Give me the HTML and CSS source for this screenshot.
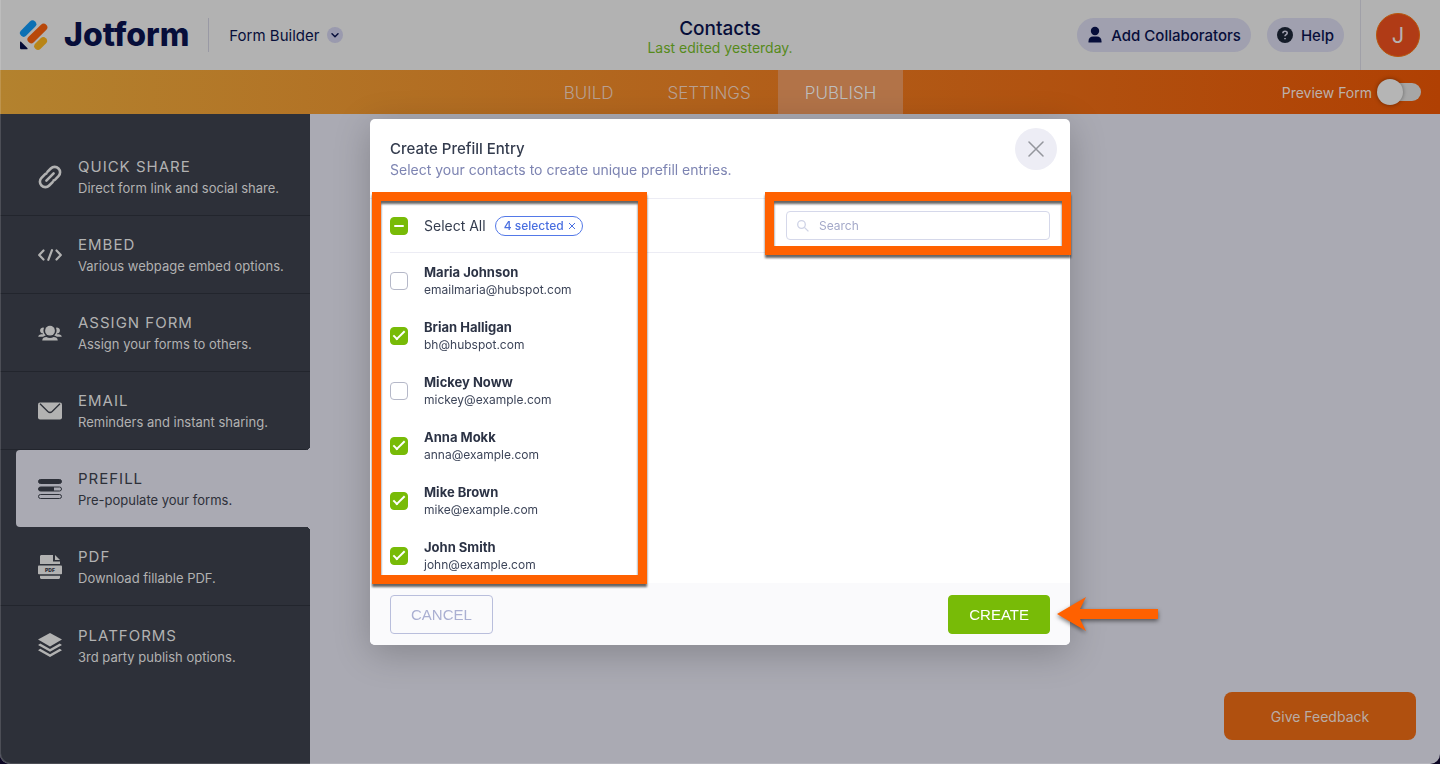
FILE: index.html
```html
<!DOCTYPE html>
<html lang="en">
<head>
<meta charset="utf-8">
<meta name="viewport" content="width=device-width, initial-scale=1">
<title>Contacts - Jotform Form Builder</title>
<link rel="stylesheet" href="styles.css">
</head>
<body>
<div class="app">
  <header class="topbar">
    <div class="topbar-left">
      <a class="brand" href="#">
        <svg class="brand-mark" viewBox="0 0 30 32" aria-hidden="true">
          <g fill="none" stroke-width="7.4" stroke-linecap="round">
            <path stroke="#0c70b4" d="M4.7 14 13.5 5.200"/>
            <path stroke="#b8480a" d="M12.200 20.500 24.600 8.300"/>
            <path stroke="#b88517" d="M19 27.200 24.300 21.900"/>
          </g>
          <path fill="#040b36" d="M1 23.300c0-.8.7-1 1.300-.4l6 6c.6.6.3 1.400-.5 1.400H2.600c-1 0-1.600-.6-1.600-1.600z"/>
        </svg>
        <span class="brand-name">Jotform</span>
      </a>
      <button class="product" type="button">Form Builder
        <span class="chevron"><svg viewBox="0 0 16 16" aria-hidden="true"><path d="M5 6.800 8 9.700 11 6.800"/></svg></span>
      </button>
    </div>
    <div class="doc">
      <h1 class="doc-title">Contacts</h1>
      <p class="doc-status">Last edited yesterday.</p>
    </div>
    <div class="topbar-right">
      <button class="pill" type="button">
        <svg viewBox="0 0 16 18" class="icon-user" aria-hidden="true"><circle cx="8" cy="5" r="4.200"/><path d="M1.500 16.500v-1.300C1.500 12 3.500 10.500 6 10.500h4c2.500 0 4.500 1.500 4.500 4.700v1.300z"/></svg>
        Add Collaborators</button>
      <button class="pill pill-help" type="button">
        <svg viewBox="0 0 16 16" class="icon-help" aria-hidden="true"><circle cx="8" cy="8" r="8"/><path d="M5.900 6.300C5.900 5 6.800 4.300 8 4.300s2.200.7 2.200 1.800c0 1.600-2.200 1.500-2.200 3.200M8 10.900v1.300"/></svg>
        Help</button>
      <div class="account"><button class="avatar" type="button">J</button></div>
    </div>
  </header>

  <nav class="tabs">
    <div class="tab-list">
      <a class="tab" href="#">BUILD</a>
      <a class="tab" href="#">SETTINGS</a>
      <a class="tab tab-active" href="#">PUBLISH</a>
    </div>
    <label class="preview">Preview Form <input class="switch" type="checkbox"></label>
  </nav>

  <div class="content">
    <aside class="sidebar">
      <a class="side-item" href="#">
        <svg class="side-icon" viewBox="0 0 24 24" aria-hidden="true"><g fill="none" stroke="currentColor" stroke-width="2.600" stroke-linecap="round" stroke-linejoin="round"><path d="M8.400 15.600 15.600 8.400"/><path d="M9.400 6.900l3.400-3.400a5.400 5.400 0 0 1 7.700 7.700l-3.400 3.400a4 4 0 0 1-1.500.9"/><path d="M14.600 17.100l-3.400 3.400a5.400 5.400 0 0 1-7.700-7.700l3.400-3.400a4 4 0 0 1 1.500-.9"/></g></svg>
        <span class="side-text"><span class="side-title">QUICK SHARE</span><span class="side-note">Direct form link and social share.</span></span>
      </a>
      <a class="side-item" href="#">
        <svg class="side-icon" viewBox="0 0 24 24" aria-hidden="true"><path fill="none" stroke="currentColor" stroke-width="2.200" stroke-linejoin="round" stroke-linecap="round" d="M5.500 7.500 1.200 12l4.300 4.500M18.500 7.500l4.300 4.500-4.300 4.500M14 7.200 10.300 16.800"/></svg>
        <span class="side-text"><span class="side-title">EMBED</span><span class="side-note">Various webpage embed options.</span></span>
      </a>
      <a class="side-item" href="#">
        <svg class="side-icon" viewBox="0 0 24 24" aria-hidden="true"><g fill="currentColor"><circle cx="12" cy="9.700" r="4.900"/><path d="M4.200 19.400c.2-2.600 2-3.300 4.200-3.400 2 1.300 5.200 1.300 7.200 0 2.200.1 4 .8 4.200 3.400z"/><path d="M6 6.800a2.900 2.900 0 1 0-1 5.600v.9c-2.500 0-4.600.4-4.800 2.400h4.900c.7-.7 1.700-1 2.700-1.200A7 7 0 0 1 6 6.800z"/><path d="M18 6.800a2.900 2.900 0 1 1 1 5.600v.9c2.500 0 4.600.4 4.800 2.400h-4.900c-.7-.7-1.700-1-2.700-1.200A7 7 0 0 0 18 6.800z"/></g></svg>
        <span class="side-text"><span class="side-title">ASSIGN FORM</span><span class="side-note">Assign your forms to others.</span></span>
      </a>
      <a class="side-item" href="#">
        <svg class="side-icon" viewBox="0 0 24 24" aria-hidden="true"><rect x="0" y="3.500" width="24" height="17" rx="2" fill="currentColor"/><path d="M2 4.700 9.800 12.500q2.200 2 4.400 0L22 4.700" fill="none" stroke="#2d3039" stroke-width="1.300"/></svg>
        <span class="side-text"><span class="side-title">EMAIL</span><span class="side-note">Reminders and instant sharing.</span></span>
      </a>
      <a class="side-item side-active" href="#">
        <svg class="side-icon" viewBox="0 0 24 24" aria-hidden="true"><g fill="none" stroke="currentColor"><rect x=".5" y="2.500" width="23" height="4" rx="2" fill="currentColor"/><rect x=".5" y="10" width="23" height="4" rx="2"/><rect x=".5" y="17.500" width="23" height="4" rx="2"/></g><path fill="currentColor" d="M2.500 10H16v4H2.500a2 2 0 0 1 0-4z"/></svg>
        <span class="side-text"><span class="side-title">PREFILL</span><span class="side-note">Pre-populate your forms.</span></span>
      </a>
      <a class="side-item" href="#">
        <svg class="side-icon" viewBox="0 0 24 24" aria-hidden="true"><g fill="currentColor"><path d="M2 9V1.500C2 .6 2.600 0 3.500 0H15v6.500h7V9z"/><path d="M17 0l5 5h-5z"/><rect x="0" y="10.500" width="24" height="8.800" rx=".8"/><path d="M2 20.800h20v1.700c0 .9-.6 1.500-1.500 1.500h-17C2.600 24 2 23.400 2 22.500z"/></g><text x="12" y="16.800" class="pdf-tag">PDF</text></svg>
        <span class="side-text"><span class="side-title">PDF</span><span class="side-note">Download fillable PDF.</span></span>
      </a>
      <a class="side-item" href="#">
        <svg class="side-icon" viewBox="0 0 24 24" aria-hidden="true"><path fill="currentColor" d="M12 0 24 6.600 12 13.400 0 6.600z"/><path fill="currentColor" d="M2.300 10.500 12 16l9.700-5.500L24 12l-12 6.800L0 12z"/><path fill="currentColor" d="M2.300 15.700 12 21.200l9.700-5.500L24 17.200 12 24 0 17.200z"/></svg>
        <span class="side-text"><span class="side-title">PLATFORMS</span><span class="side-note">3rd party publish options.</span></span>
      </a>
    </aside>
    <main class="workspace">
      <button class="feedback" type="button">Give Feedback</button>
    </main>
  </div>
</div>

<div class="backdrop">
  <section class="modal" role="dialog" aria-labelledby="modal-title">
    <div class="modal-head">
      <div>
        <h2 class="modal-title" id="modal-title">Create Prefill Entry</h2>
        <p class="modal-note">Select your contacts to create unique prefill entries.</p>
      </div>
      <button class="close" type="button" aria-label="Close"><svg viewBox="0 0 16 16" aria-hidden="true"><path d="M1 1 15 15M15 1 1 15"/></svg></button>
    </div>
    <div class="modal-tools">
      <input class="check check-mixed" type="checkbox" id="all">
      <label class="all-label" for="all">Select All</label>
      <button class="count" type="button">4 selected <svg viewBox="0 0 8 8" aria-hidden="true"><path d="M1 1 7 7M7 1 1 7"/></svg></button>
      <label class="search">
        <svg viewBox="0 0 12 12" aria-hidden="true"><circle cx="4.500" cy="4.500" r="3.800"/><path d="M7.400 7.400 11.400 11.400"/></svg>
        <input type="text" placeholder="Search" aria-label="Search">
      </label>
    </div>
    <div class="people">
      <label class="person"><input class="check" type="checkbox"><span><b>Maria Johnson</b><span class="mail">emailmaria@hubspot.com</span></span></label>
      <label class="person"><input class="check" type="checkbox" checked><span><b>Brian Halligan</b><span class="mail">bh@hubspot.com</span></span></label>
      <label class="person"><input class="check" type="checkbox"><span><b>Mickey Noww</b><span class="mail">mickey@example.com</span></span></label>
      <label class="person"><input class="check" type="checkbox" checked><span><b>Anna Mokk</b><span class="mail">anna@example.com</span></span></label>
      <label class="person"><input class="check" type="checkbox" checked><span><b>Mike Brown</b><span class="mail">mike@example.com</span></span></label>
      <label class="person"><input class="check" type="checkbox" checked><span><b>John Smith</b><span class="mail">john@example.com</span></span></label>
    </div>
    <div class="modal-foot">
      <button class="btn btn-cancel" type="button">CANCEL</button>
      <button class="btn btn-create" type="button">CREATE</button>
    </div>
    <div class="callout callout-list"></div>
    <div class="callout callout-search"></div>
    <svg class="arrow" viewBox="0 0 101 36" aria-hidden="true"><path d="M0 18 29 1 23 13H101V23H23L29 35z"/></svg>
  </section>
</div>
</body>
</html>
```
FILE: styles.css
```css
* { box-sizing: border-box; }
body {
  margin: 0;
  background: #0c0624;
  color: #2c3345;
  font-family: Inter, "Liberation Sans", sans-serif;
}
h1, h2, p { margin: 0; font-weight: 400; }
button { border: 0; padding: 0; background: none; color: inherit; font: inherit; }
a { color: inherit; text-decoration: none; }

.app {
  display: flex;
  flex-direction: column;
  min-height: 100vh;
  border-radius: 0 0 10px 10px;
  overflow: hidden;
  background: #aaaab3;
}

.topbar {
  display: grid;
  grid-template-columns: 1fr auto 1fr;
  align-items: center;
  height: 70px;
  background: #b2b2b2;
  color: #070e3a;
}
.topbar-left { display: flex; align-items: center; padding-left: 19px; }
.brand { display: flex; align-items: center; gap: 15px; }
.brand-mark { width: 30px; height: 32px; }
.brand-name { font-size: 32px; font-weight: 800; line-height: 34px; }
.product {
  display: flex;
  align-items: center;
  gap: 8px;
  height: 34px;
  margin-left: 19px;
  padding-left: 20px;
  border-left: 1px solid #9999a4;
  font-size: 15px;
}
.chevron { display: flex; width: 16px; height: 16px; border-radius: 50%; background: #9a9aae; }
.chevron svg { width: 16px; fill: none; stroke: #070e3a; stroke-width: 1.500; stroke-linecap: round; stroke-linejoin: round; }
.doc { padding-top: 3px; text-align: center; }
.doc-title { font-size: 19px; font-weight: 500; line-height: 22px; }
.doc-status { color: #568a1b; font-size: 14px; line-height: 16px; }
.topbar-right { display: flex; align-items: center; justify-content: flex-end; gap: 16px; }
.pill {
  display: flex;
  align-items: center;
  gap: 8px;
  height: 34px;
  padding: 0 10px;
  border-radius: 17px;
  background: #a0a0af;
  font-size: 15px;
  font-weight: 500;
}
.icon-user { width: 16px; height: 18px; fill: #070e3a; }
.icon-help { width: 16px; height: 16px; fill: #151c29; }
.icon-help path { fill: none; stroke: #a0a0af; stroke-width: 1.600; }
.account { display: flex; align-items: center; height: 70px; padding: 0 20px 0 15px; border-left: 1px solid #a0a0a8; }
.avatar { width: 44px; height: 44px; border-radius: 50%; border: 1px solid #b8560b; background: #b03b16; color: #b6b2b2; font-size: 22px; }

.tabs {
  display: grid;
  grid-template-columns: 1fr auto 1fr;
  height: 44px;
  background: linear-gradient(90deg, #b3822e, #b2611b 50%, #b04003);
  color: #b8a092;
}
.tab-list { grid-column: 2; display: flex; }
.tab { display: flex; align-items: center; padding: 2px 27px 0; font-size: 17px; font-weight: 300; }
.tab-active { background: #b27348; color: #bebebe; }
.preview {
  display: flex;
  align-items: center;
  justify-content: flex-end;
  gap: 5px;
  padding-right: 19px;
  color: #bcb1ac;
  font-size: 14px;
}
.switch {
  appearance: none;
  display: flex;
  align-items: center;
  width: 44px;
  height: 18px;
  margin: 0;
  border-radius: 9px;
  background: linear-gradient(90deg, transparent 13px, #a6a6a6 13px);
}
.switch::before { content: ""; width: 26px; height: 26px; flex: none; border-radius: 50%; background: #b5b5b5; box-shadow: 0 0 4px rgba(0, 0, 0, .4); }

.content { display: flex; flex: 1; }
.sidebar { width: 310px; padding-top: 24px; background: #2d3039; color: #b2b2b2; }
.side-item {
  display: flex;
  align-items: center;
  gap: 16px;
  height: 78px;
  padding-left: 38px;
  border-bottom: 1px solid #22252d;
}
.side-item:last-child { border-bottom: 0; }
.side-active {
  position: relative;
  height: 77px;
  margin: 0 0 1px 16px;
  padding-left: 22px;
  border: 0;
  border-radius: 4px 0 0 4px;
  background: #aaaab3;
  color: #2d3039;
}
/* Rounded inner corners where the active item meets the workspace */
.side-active::before,
.side-active::after { content: ""; position: absolute; right: 0; width: 4px; height: 4px; }
.side-active::before { bottom: 100%; background: radial-gradient(circle at 0 0, #2d3039 4px, #aaaab3 4px); }
.side-active::after { top: 100%; background: radial-gradient(circle at 0 100%, #2d3039 4px, #aaaab3 4px); }
.side-icon { width: 24px; height: 24px; flex: none; }
.side-text { display: flex; flex-direction: column; padding-top: 1px; }
.side-title { font-size: 15px; line-height: 22px; letter-spacing: 1px; }
.side-note { font-size: 13px; line-height: 20px; }
.pdf-tag { fill: #2d3039; font-size: 5px; font-weight: 900; text-anchor: middle; }
.workspace { display: flex; flex: 1; align-items: flex-end; justify-content: flex-end; padding: 24px; }
.feedback { width: 192px; height: 48px; border-radius: 8px; background: #b0500f; color: #b9aca6; font-size: 14px; }

.backdrop { position: fixed; inset: 0; display: flex; align-items: center; justify-content: center; box-shadow: inset 1px -1px 0 rgba(255, 255, 255, .15); border-radius: 0 0 10px 10px; }
.modal { position: relative; width: 700px; border-radius: 5px; background: #fff; box-shadow: 0 8px 36px rgba(0, 0, 0, .22); }
.modal-head { display: flex; justify-content: space-between; padding: 9px 13px 0 20px; height: 80px; border-bottom: 1px solid #ececf4; }
.modal-title { padding-top: 10px; color: #343c4e; font-size: 15px; font-weight: 500; line-height: 22px; }
.modal-note { color: #7d84b2; font-size: 14px; line-height: 20px; }
.close { display: flex; align-items: center; justify-content: center; width: 42px; height: 42px; border-radius: 50%; background: #ededf5; }
.close svg { width: 16px; fill: none; stroke: #94969d; stroke-width: 1.500; stroke-linecap: round; }
.modal-tools { display: flex; align-items: center; height: 54px; margin: 0 20px; border-bottom: 1px solid #ececf4; }
.check {
  appearance: none;
  display: flex;
  align-items: center;
  justify-content: center;
  flex: none;
  width: 18px;
  height: 18px;
  margin: 0;
  border: 1px solid #b5b8c8;
  border-radius: 4px;
  background: #fff;
}
.check:checked, .check-mixed { border-color: #78bb07; background: #78bb07; }
.check:checked::before { content: ""; box-sizing: border-box; width: 12px; height: 6px; border: solid #fff; border-width: 0 0 2px 2px; transform: translateY(-2px) rotate(-45deg); }
.check-mixed::before { content: ""; width: 10px; height: 2px; border-radius: 1px; background: #fff; }
.all-label { margin: 0 9px 0 16px; font-size: 14px; color: #343c4e; }
.count { display: flex; align-items: center; gap: 4px; height: 20px; padding: 0 6px 0 8px; border: 1px solid #5479e8; border-radius: 10px; color: #4a6fe0; font-size: 12px; font-weight: 500; }
.count svg { width: 8px; stroke: currentColor; stroke-width: 1; }
.search { display: flex; align-items: center; gap: 10px; width: 264px; height: 29px; margin-left: auto; padding: 0 10px; border: 1px solid #d5d8ea; border-radius: 4px; }
.search svg { width: 12px; flex: none; fill: none; stroke: #cfd3e6; stroke-width: 1.300; }
.search input { width: 100%; border: 0; padding: 0; outline: 0; background: none; font: inherit; font-size: 12px; }
.search input::placeholder { color: #a4a9c9; opacity: 1; }
.person { display: flex; align-items: center; gap: 16px; height: 55px; padding: 0 20px; }
.person b { display: block; font-size: 13px; font-weight: 700; line-height: 17px; }
.mail { display: block; color: #3d4559; font-size: 12px; line-height: 17px; }
.modal-foot { display: flex; align-items: center; justify-content: space-between; height: 62px; padding: 0 20px; border-radius: 0 0 5px 5px; background: #fafafc; }
.btn { height: 39px; padding: 0 20px; border: 1px solid; border-radius: 4px; font: 15px "Liberation Sans", Arial, sans-serif; }
.btn-cancel { border-color: #b9bedc; color: #abb0d2; }
.btn-create { border-color: #78bb07; background: #78bb07; color: #fff; }

.callout { position: absolute; border: 9px solid #ff6100; filter: drop-shadow(0 3px 1px rgba(0, 0, 0, .6)); pointer-events: none; }
.callout-list { left: 2px; top: 73px; width: 275px; height: 392px; }
.callout-search { left: 395px; top: 73px; width: 306px; height: 63px; }
.arrow { position: absolute; left: 687px; top: 477px; width: 101px; height: 36px; fill: #ff6100; overflow: visible; filter: drop-shadow(0 2px 2px rgba(0, 0, 0, .5)); }
```
